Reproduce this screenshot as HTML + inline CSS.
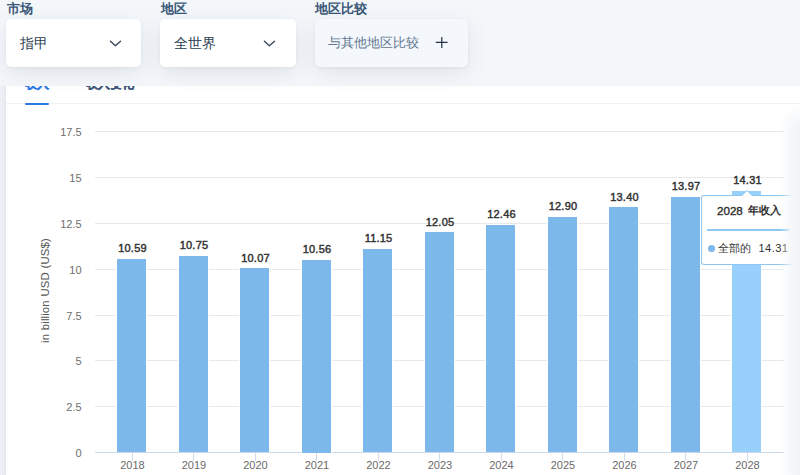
<!DOCTYPE html>
<html><head><meta charset="utf-8">
<style>
html,body{margin:0;padding:0;width:800px;height:475px;overflow:hidden;background:#fff;font-family:"Liberation Sans",sans-serif;}
*{box-sizing:border-box;}
.abs{position:absolute;}
#leftstrip{left:0;top:86px;width:6px;height:389px;background:linear-gradient(to right,#eef1f5,#e9ecf1 70%,#e3e7ed);}
#rshadow{left:780px;top:104px;width:20px;height:371px;background:linear-gradient(to right,rgba(244,246,249,0),rgba(244,246,249,0.8) 55%,rgba(242,244,247,1));-webkit-mask-image:linear-gradient(to bottom,transparent,#000 22px);}
#tabline{left:6px;top:103px;width:794px;height:1px;background:#eef2f7;}
#tabul{left:24.5px;top:102.6px;width:24.2px;height:2.1px;border-radius:1px;background:#2a77e6;}
.tab{top:76.8px;font-size:12px;font-weight:bold;-webkit-text-stroke:0.3px currentColor;line-height:14px;white-space:nowrap;}
#top{left:0;top:0;width:800px;height:86px;background:#f4f7fa;}
.lbl{top:0px;font-size:13.2px;font-weight:bold;color:#3b5878;line-height:17px;white-space:nowrap;}
.card{top:19px;height:48px;border-radius:5px;background:#fff;box-shadow:0 6px 22px rgba(40,60,90,0.10),0 1px 3px rgba(40,60,90,0.06);}
.ctext{font-size:13.6px;color:#2c3e52;line-height:16px;white-space:nowrap;}
.ytick{font-size:11px;color:#6e6e6e;text-align:right;width:40px;left:41.6px;line-height:11px;}
.grid{left:95px;width:689px;height:1px;background:#e9e9e9;}
.bar{width:29px;background:#7cb9ea;box-shadow:1px 0 0 #fff,-1px 0 0 #fff;}
.val{font-size:11px;font-weight:normal;-webkit-text-stroke:0.45px #333;letter-spacing:0.2px;color:#333;width:60px;text-align:center;line-height:11px;}
.xl{font-size:11px;color:#6a6a6a;width:60px;text-align:center;line-height:11px;top:460px;}
.tick{width:1px;height:8px;top:453px;background:#d3dcef;}
</style></head>
<body>
<div class="abs" id="leftstrip"></div>
<div class="abs tab" style="left:24.5px;color:#2a78e4;">收入</div>
<div class="abs tab" style="left:86px;color:#41587a;">收入变化</div>
<div class="abs" id="tabline"></div>
<div class="abs" id="tabul"></div>
<div class="abs ytick" style="top:127.00px;">17.5</div>
<div class="abs grid" style="top:131.00px;"></div>
<div class="abs ytick" style="top:173.00px;">15</div>
<div class="abs grid" style="top:177.00px;"></div>
<div class="abs ytick" style="top:219.00px;">12.5</div>
<div class="abs grid" style="top:223.00px;"></div>
<div class="abs ytick" style="top:265.00px;">10</div>
<div class="abs grid" style="top:269.00px;"></div>
<div class="abs ytick" style="top:311.00px;">7.5</div>
<div class="abs grid" style="top:315.00px;"></div>
<div class="abs ytick" style="top:356.00px;">5</div>
<div class="abs grid" style="top:360.00px;"></div>
<div class="abs ytick" style="top:402.00px;">2.5</div>
<div class="abs grid" style="top:406.00px;"></div>
<div class="abs ytick" style="top:448.00px;">0</div>
<div class="abs grid" style="top:452.00px;background:#ccd6eb;"></div>
<div class="abs" style="left:40px;top:343px;transform-origin:0 0;transform:rotate(-90deg);font-size:11.4px;letter-spacing:0.1px;word-spacing:0.5px;color:#555;white-space:nowrap;line-height:11px;">in billion USD (US$)</div>
<div class="abs bar" style="left:117.20px;top:258.95px;height:193.55px;background:#7cb9ea"></div>
<div class="abs val" style="left:102.50px;top:243.35px;">10.59</div>
<div class="abs xl" style="left:102.40px;">2018</div>
<div class="abs tick" style="left:131.60px;"></div>
<div class="abs bar" style="left:178.70px;top:256.01px;height:196.49px;background:#7cb9ea"></div>
<div class="abs val" style="left:164.00px;top:240.41px;">10.75</div>
<div class="abs xl" style="left:163.90px;">2019</div>
<div class="abs tick" style="left:193.10px;"></div>
<div class="abs bar" style="left:240.20px;top:268.49px;height:184.01px;background:#7cb9ea"></div>
<div class="abs val" style="left:225.50px;top:252.89px;">10.07</div>
<div class="abs xl" style="left:225.40px;">2020</div>
<div class="abs tick" style="left:254.60px;"></div>
<div class="abs bar" style="left:301.70px;top:259.50px;height:193.00px;background:#7cb9ea"></div>
<div class="abs val" style="left:287.00px;top:243.90px;">10.56</div>
<div class="abs xl" style="left:286.90px;">2021</div>
<div class="abs tick" style="left:316.10px;"></div>
<div class="abs bar" style="left:363.20px;top:248.68px;height:203.82px;background:#7cb9ea"></div>
<div class="abs val" style="left:348.50px;top:233.08px;">11.15</div>
<div class="abs xl" style="left:348.40px;">2022</div>
<div class="abs tick" style="left:377.60px;"></div>
<div class="abs bar" style="left:424.70px;top:232.17px;height:220.33px;background:#7cb9ea"></div>
<div class="abs val" style="left:410.00px;top:216.57px;">12.05</div>
<div class="abs xl" style="left:409.90px;">2023</div>
<div class="abs tick" style="left:439.10px;"></div>
<div class="abs bar" style="left:486.20px;top:224.65px;height:227.85px;background:#7cb9ea"></div>
<div class="abs val" style="left:471.50px;top:209.05px;">12.46</div>
<div class="abs xl" style="left:471.40px;">2024</div>
<div class="abs tick" style="left:500.60px;"></div>
<div class="abs bar" style="left:547.70px;top:216.58px;height:235.92px;background:#7cb9ea"></div>
<div class="abs val" style="left:533.00px;top:200.98px;">12.90</div>
<div class="abs xl" style="left:532.90px;">2025</div>
<div class="abs tick" style="left:562.10px;"></div>
<div class="abs bar" style="left:609.20px;top:207.40px;height:245.10px;background:#7cb9ea"></div>
<div class="abs val" style="left:594.50px;top:191.80px;">13.40</div>
<div class="abs xl" style="left:594.40px;">2026</div>
<div class="abs tick" style="left:623.60px;"></div>
<div class="abs bar" style="left:670.70px;top:196.95px;height:255.55px;background:#7cb9ea"></div>
<div class="abs val" style="left:656.00px;top:181.35px;">13.97</div>
<div class="abs xl" style="left:655.90px;">2027</div>
<div class="abs tick" style="left:685.10px;"></div>
<div class="abs bar" style="left:732.20px;top:190.71px;height:261.79px;background:#96d0fb"></div>
<div class="abs val" style="left:717.50px;top:175.11px;">14.31</div>
<div class="abs xl" style="left:717.40px;">2028</div>
<div class="abs tick" style="left:746.60px;"></div>
<div class="abs" id="top"></div>
<div class="abs lbl" style="left:6.5px;">市场</div>
<div class="abs lbl" style="left:160.5px;">地区</div>
<div class="abs lbl" style="left:314.5px;">地区比较</div>
<div class="abs card" style="left:6px;width:135px;"></div>
<div class="abs card" style="left:160px;width:135.5px;"></div>
<div class="abs card" style="left:314.5px;width:153px;background:#f4f7fb;"></div>
<div class="abs ctext" style="left:20px;top:35.5px;">指甲</div>
<div class="abs ctext" style="left:174px;top:35.5px;">全世界</div>
<div class="abs ctext" style="left:328.2px;top:35.3px;font-size:13.35px;color:#627890;">与其他地区比较</div>
<svg class="abs" style="left:109px;top:39px;" width="14" height="10" viewBox="0 0 14 10"><path d="M1.4 2.3 L6.4 6.8 L11.5 2.3" fill="none" stroke="#3d4b5c" stroke-width="1.45" stroke-linecap="round" stroke-linejoin="round"/></svg>
<svg class="abs" style="left:263.3px;top:39px;" width="14" height="10" viewBox="0 0 14 10"><path d="M1.4 2.3 L6.4 6.8 L11.5 2.3" fill="none" stroke="#3d4b5c" stroke-width="1.45" stroke-linecap="round" stroke-linejoin="round"/></svg>
<svg class="abs" style="left:435px;top:36px;" width="14" height="14" viewBox="0 0 14 14"><path d="M6.8 1 V12 M0.8 6.4 H12.6" fill="none" stroke="#233246" stroke-width="1.2"/></svg>
<div class="abs" style="left:700.5px;top:195.3px;width:91.5px;height:69.5px;background:#fff;border:1px solid #8ec8f2;border-right:none;border-radius:3px 0 0 3px;"></div>
<div class="abs" style="left:741px;top:189.5px;width:0;height:0;border-left:6.5px solid transparent;border-right:6.5px solid transparent;border-bottom:6.5px solid #8ec8f2;"></div>
<div class="abs" style="left:742px;top:191px;width:0;height:0;border-left:5.5px solid transparent;border-right:5.5px solid transparent;border-bottom:5.5px solid #fff;"></div>
<div class="abs" style="left:717px;top:204.3px;font-size:11.6px;font-weight:normal;-webkit-text-stroke:0.4px #333;color:#333;line-height:14px;white-space:nowrap;">2028</div>
<div class="abs" style="left:747.8px;top:203.4px;font-size:11.2px;font-weight:bold;-webkit-text-stroke:0px #333;color:#333;line-height:14px;white-space:nowrap;">年收入</div>
<div class="abs" style="left:707px;top:229px;width:82px;height:1.6px;background:#8ec8f2;"></div>
<div class="abs" style="left:708px;top:244.7px;width:7.4px;height:7.4px;border-radius:50%;background:#7cb9ea;"></div>
<div class="abs" style="left:718.2px;top:240.8px;font-size:11.4px;color:#333;line-height:14px;white-space:nowrap;">全部的</div>
<div class="abs" style="left:758.5px;top:241px;font-size:11.2px;letter-spacing:0.4px;color:#333;line-height:14px;white-space:nowrap;">14.31</div>
<div class="abs" id="rshadow"></div>
</body></html>
